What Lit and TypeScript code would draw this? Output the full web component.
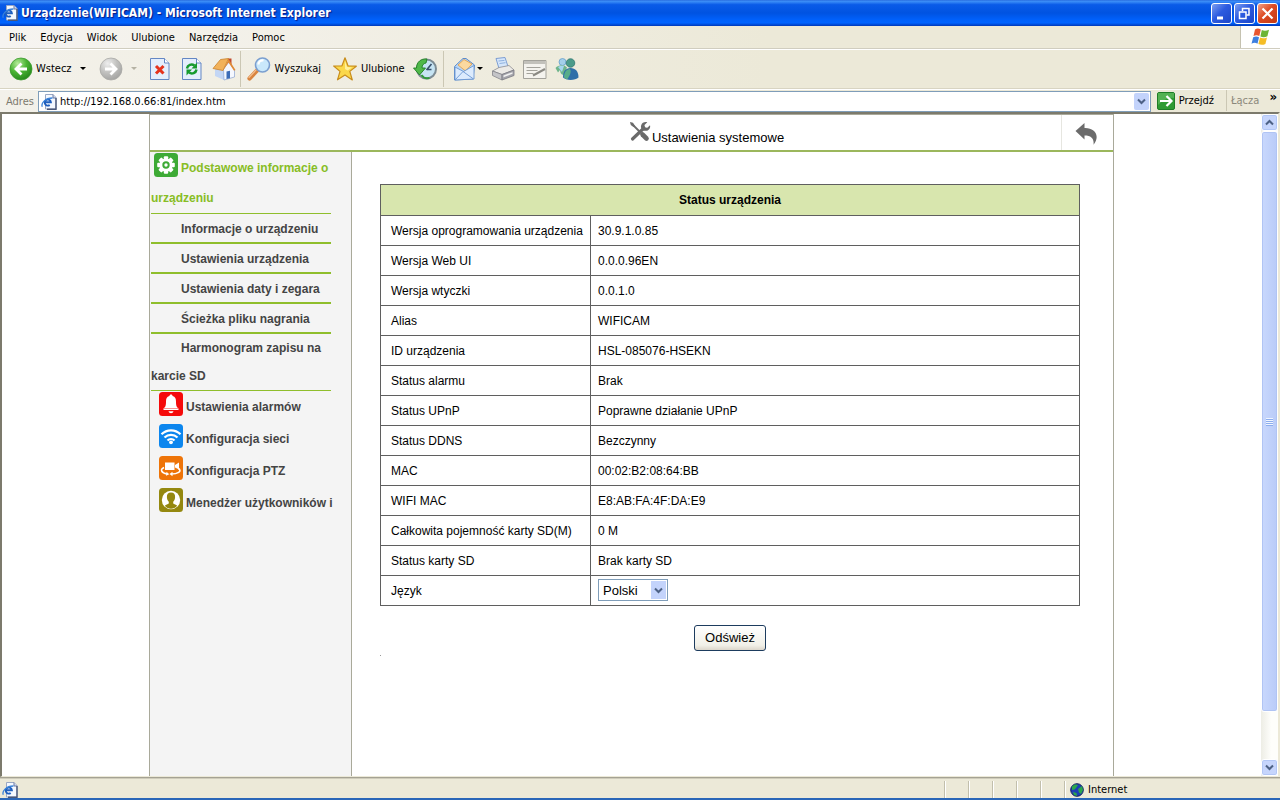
import { LitElement, html, css, svg } from "lit";
import { customElement, state } from "lit/decorators.js";

const pageIcon = (size: number) => html`<svg width=${size} height=${size} viewBox="0 0 16 16" aria-hidden="true">
  <path d="M4.500 .5h7.500l3 3v11.500H4.500z" fill="#f4f8ff" stroke="#9aa8c4" />
  <path d="M12 .5v3.500h3" fill="#cfd9ee" stroke="#6d7ba0" />
  <path d="M15 4v11.200H6" fill="none" stroke="#4a5778" stroke-width="1.400" />
  <path d="M3.500 8.300h6.400a3.100 3.100 0 1 0-1.200 2.700" fill="none" stroke="#1f5fbe" stroke-width="1.900" />
  <path d="M1.300 12.700C-.2 9.500 4 4 11.500 4" fill="none" stroke="#3a82d8" stroke-width="1.300" />
</svg>`;

const icons = {
  back: html`<svg width="24" height="24" viewBox="0 0 24 24" aria-hidden="true">
    <defs><radialGradient id="backfill" cx=".35" cy=".25" r=".8"><stop offset="0" stop-color="#b5eb9a" /><stop offset=".5" stop-color="#4bb534" /><stop offset="1" stop-color="#23851a" /></radialGradient></defs>
    <circle cx="12" cy="12" r="11" fill="url(#backfill)" stroke="#3e9a30" stroke-width=".8" />
    <path d="M12.500 6.500L7 12l5.500 5.500M7.500 12H18" fill="none" stroke="#fff" stroke-width="2.800" />
  </svg>`,
  forward: html`<svg width="24" height="24" viewBox="0 0 24 24" aria-hidden="true">
    <defs><radialGradient id="forwardfill" cx=".35" cy=".25" r=".8"><stop offset="0" stop-color="#eee" /><stop offset=".5" stop-color="#c3c3c1" /><stop offset="1" stop-color="#a2a2a0" /></radialGradient></defs>
    <circle cx="12" cy="12" r="11" fill="url(#forwardfill)" stroke="#a9a9a6" stroke-width=".8" />
    <path d="M11.500 6.500L17 12l-5.500 5.500M16.500 12H6" fill="none" stroke="#fff" stroke-width="2.800" />
  </svg>`,
  stop: html`<svg width="20" height="24" viewBox="0 0 20 24" aria-hidden="true">
    <path d="M.5 1.500h14l4.500 4.500v16.500H.5z" fill="#e4eefc" stroke="#6487c4" />
    <path d="M14.500 1.500V6H19" fill="#fff" stroke="#6487c4" />
    <path d="M6 9l7.500 7.500M13.500 9L6 16.500" stroke="#e5341d" stroke-width="3" />
  </svg>`,
  refresh: html`<svg width="20" height="24" viewBox="0 0 20 24" aria-hidden="true">
    <path d="M.5 1.500h14l4.500 4.500v16.500H.5z" fill="#e4eefc" stroke="#6487c4" />
    <path d="M14.500 1.500V6H19" fill="#fff" stroke="#6487c4" />
    <path d="M5 11.500c.5-3.500 4.500-5 7.500-3M14.500 12.500c-.5 3.500-4.500 5-7.500 3" fill="none" stroke="#169a2e" stroke-width="2.500" />
    <path d="M15 5.500v6H9.500z" fill="#169a2e" /><path d="M4.500 18.500v-6H10z" fill="#169a2e" />
  </svg>`,
  home: html`<svg width="24" height="24" viewBox="0 0 24 24" aria-hidden="true">
    <path d="M16 1.500h3.500V8H16z" fill="#c14a2d" />
    <path d="M3 12l7-7 2 8v10l-9-4z" fill="#c3d6f5" />
    <path d="M11.500 12l5.500-7 5.500 8v7L12 23z" fill="#f5f8ff" stroke="#8ba4d2" stroke-width=".7" />
    <path d="M1 11.500L8.500 2.500l8-1-5.500 12z" fill="#f2b25a" stroke="#c9822b" stroke-width=".8" />
    <path d="M16.500 2l7 11-1.500.8-5.500-8.300-5 7.500z" fill="#e08a35" />
    <path d="M14.500 14.500l3.500-.8v7.500l-3.500.8z" fill="#3c6cb8" />
  </svg>`,
  search: html`<svg width="24" height="24" viewBox="0 0 24 24" aria-hidden="true">
    <path d="M2.500 21.500L10 13.500" stroke="#d9843f" stroke-width="4.200" stroke-linecap="round" />
    <path d="M2 20.500L9 13" stroke="#f3bd8c" stroke-width="1.200" stroke-linecap="round" />
    <circle cx="15.500" cy="8" r="7" fill="#c9e8fb" stroke="#7b9fd0" stroke-width="1.600" />
    <path d="M11.500 7.500c0-3 2.500-4.500 5-4" fill="none" stroke="#fff" stroke-width="2.200" />
  </svg>`,
  star: html`<svg width="24" height="24" viewBox="0 0 24 24" aria-hidden="true">
    <path d="M12 .8l3 8 8.300.4-6.500 5.200 2.500 8.600L12 18l-7.500 4.800 2.500-8.400L.7 9l8.300-.2z" fill="#fbd84a" stroke="#c88d1c" stroke-width="1.200" stroke-linejoin="round" />
    <path d="M12 4l2 6 5 .5-4.500 3L12 12z" fill="#fff19f" />
  </svg>`,
  history: html`<svg width="24" height="24" viewBox="0 0 24 24" aria-hidden="true">
    <circle cx="13.500" cy="12" r="9.500" fill="#c6e4f3" stroke="#7d8c94" stroke-width="2" />
    <path d="M13.500 13l5-6M13.500 12.500h5" stroke="#37506b" stroke-width="1.600" />
    <path d="M14 2C8 1.300 3.500 5 3.500 11H.5l6 7 6-7H9c0-3 1.500-4.500 4-5z" fill="#4fb848" stroke="#1f7e24" stroke-width=".9" />
    <path d="M8.500 18c2 3 5 3.800 8 2.800" fill="none" stroke="#2f9a3a" stroke-width="1.800" />
  </svg>`,
  mail: html`<svg width="24" height="24" viewBox="0 0 24 24" aria-hidden="true">
    <path d="M1.500 9.500L10 1.500h3l8.500 6.500-1.500 14-18.500 1z" fill="#b8d6f6" stroke="#5e8cc9" />
    <path d="M5 8l6-5.500 8 4.500-6.500 7z" fill="#fbd9a0" stroke="#e39b3f" stroke-width=".8" />
    <path d="M2 10l8.500 4.500L21 8.500V22L2 23z" fill="#dcebfd" stroke="#6b97d2" stroke-width=".9" />
    <path d="M2 23l8-8.500L20.500 22" fill="none" stroke="#6b97d2" stroke-width=".9" />
  </svg>`,
  print: html`<svg width="24" height="24" viewBox="0 0 24 24" aria-hidden="true">
    <path d="M5 1.500l9-1 3 9-9 2z" fill="#d5e6fb" stroke="#7d9dd2" />
    <path d="M7.500 4l6-.6M8.500 6.500l6-.8" stroke="#8fb1df" />
    <path d="M1.500 14L8 10.500l10-2 5 4.500-12 4.500z" fill="#eceae6" stroke="#8d8d92" stroke-width=".8" />
    <path d="M1.500 14l9.500 3.500V23l-9.500-4.500z" fill="#c5c5c8" stroke="#85858c" stroke-width=".8" />
    <path d="M11 17.500L23 13v5.500L11 23z" fill="#a5a5ac" stroke="#7a7a83" stroke-width=".8" />
    <path d="M12.500 18.500l9-3.300v1.600l-9 3.400z" fill="#f0f0f0" />
  </svg>`,
  edit: html`<svg width="24" height="24" viewBox="0 0 24 24" aria-hidden="true">
    <path d="M.5 3.500h22.500v18H.5z" fill="#f4f3ee" stroke="#a3a29b" />
    <path d="M1 4h21.500v3H1z" fill="#c2c1bb" />
    <path d="M3.500 10.500h14M3.500 13.500h11M3.500 16.500h7" stroke="#a3a29b" />
    <path d="M10 18.500l12-6.500" stroke="#8a8983" stroke-width="2" />
  </svg>`,
  people: html`<svg width="24" height="24" viewBox="0 0 24 24" aria-hidden="true">
    <circle cx="7.500" cy="5" r="3.500" fill="#a4cfea" stroke="#5c98c9" stroke-width=".7" />
    <path d="M.5 11c3-3.500 8.500-3.500 11.500-.5l-3 7.500c-2 0-3-1-3.500-2.500L5 13l-2 2.500z" fill="#6fb58b" />
    <path d="M3 10c2-1.500 4.500-1.500 6-1l-2 6z" fill="#a6d6ef" />
    <circle cx="15.500" cy="6" r="4.300" fill="#4b9b8a" stroke="#27706b" stroke-width=".7" />
    <path d="M8 20.500c0-6 2.500-9.500 7.500-9.500s8 3.500 8 9.500c-3 3-12 3.500-15.500 0z" fill="#2f6fa8" />
    <path d="M9 20.500c0-5 2-8 6-8.500 2 3-1 8-3 10.500z" fill="#58ad8a" />
  </svg>`,
  go: html`<svg width="18" height="18" viewBox="0 0 18 18" aria-hidden="true">
    <rect x=".5" y=".5" width="17" height="17" rx="1.500" fill="#2f9a33" stroke="#1f7d26" />
    <path d="M1 1h16v5C12 5 6 8 1 13z" fill="#6cc267" opacity=".6" />
    <path d="M9.500 4l5 5-5 5M14 9H3" fill="none" stroke="#fff" stroke-width="2.200" />
  </svg>`,
  flag: html`<svg width="20" height="20" viewBox="0 0 20 20" aria-hidden="true">
    <path d="M4 2.500c2-1.500 4-1.200 5.800 0L8.300 9C6.500 8 4.500 8 2.500 9z" fill="#e8552f" />
    <path d="M10.800 3c2 1 4.500 1 7.200-.2l-1.600 6.500c-2.500 1.200-5 1-7 .2z" fill="#6db536" />
    <path d="M2.200 10.200c2-1 4-1 5.800 0l-1.500 6.500c-2-1.200-4-1-6 0z" fill="#3d7fe0" />
    <path d="M9 10.600c2 1 4.500 1 7-.2l-1.600 6.500c-2.500 1.200-5 1-7 0z" fill="#f5bd26" />
  </svg>`,
  globe: html`<svg width="14" height="14" viewBox="0 0 14 14" aria-hidden="true">
    <circle cx="7" cy="7" r="6.300" fill="#1d3fb5" stroke="#14225c" />
    <path d="M2 3.500C4 1 7 1 8 2l-2 3-1.500 1.500L2 7zM8 6l4-3 1 4-2 4-2-1.500zM3 9l3.500 1 .5 3-3-1z" fill="#2ba84a" />
  </svg>`,
  tools: html`<svg width="22" height="22" viewBox="0 0 22 22" aria-hidden="true">
    <g fill="none" stroke="#6a6a6a"><path d="M3 3l9 9" stroke-width="1.800" /><path d="M13.500 13.500l4 4" stroke-width="4.600" stroke-linecap="round" /><path d="M3.500 18L15 7" stroke-width="3.200" stroke-linecap="round" /></g>
    <path d="M1 1l3 .8L6 5 4.500 6 1.800 4z" fill="#6a6a6a" />
    <path d="M18.300 1.300L15.500 4l.4 2.400 2.400.4L21 4.200c.9 3-1.500 6-4.800 5.600-3-.2-5-3-4-5.600.8-2.400 3.500-3.700 6.100-2.900z" fill="#6a6a6a" />
  </svg>`,
  undo: html`<svg width="24" height="24" viewBox="0 0 24 24" aria-hidden="true">
    <path d="M.5 9L9.500 1v5C19 5.500 26 13 18.500 22.800c.8-6-2-9.300-9-9.300V17.500z" fill="#6b6b6b" />
  </svg>`,
};

const tile = (color: string, art: unknown) => html`<svg class="tile" width="24" height="24" viewBox="0 0 24 24" aria-hidden="true">
  <rect width="24" height="24" rx="3.500" fill=${color} />${art}</svg>`;

const gear = tile("#3daa35", svg`<g transform="translate(12 12)" fill="#fff">
  ${[0, 45, 90, 135].map((a) => svg`<rect x="-2.200" y="-8.800" width="4.400" height="17.600" rx="1" transform="rotate(${a})" />`)}
  <circle r="6.600" /><circle r="3.700" fill="#3daa35" /><circle r="1.700" /></g>`);

const groups = [
  { label: "Ustawienia alarmów", icon: tile("#f50a0a", svg`<path d="M12 2.500c1 0 1.500.6 1.600 1.500 2.700.7 3.400 2.800 3.400 5.500 0 4 .5 5.500 2.500 7v1.500H4.500v-1.500c2-1.500 2.500-3 2.500-7 0-2.700.7-4.800 3.400-5.500.1-.9.600-1.500 1.600-1.500z" fill="#fff" /><path d="M5 16.500h14" stroke="#f58a8a" stroke-width=".9" /><path d="M9.500 19.300h5c-.5 2.500-4.500 2.500-5 0z" fill="#fff" />`) },
  { label: "Konfiguracja sieci", icon: tile("#0c86ee", svg`<g fill="none" stroke="#fff" stroke-width="2.300"><path d="M2.500 10.200c5.300-5.200 13.700-5.200 19 0" /><path d="M5.500 13.500c3.700-3.500 9.300-3.500 13 0" /><path d="M8.500 16.500c2-1.900 5-1.900 7 0" /></g><circle cx="12" cy="18.300" r="1.900" fill="#fff" />`) },
  { label: "Konfiguracja PTZ", icon: tile("#ee7408", svg`<path d="M6 6.500h9.500v7.500H6zM16 9l4-2.500v7L16 11.500z" fill="#fff" /><path d="M5 11.500c-4.500 2-2.500 5.500 3 6.500M19.500 12.500c4 3-1 5.500-7.500 5.500" fill="none" stroke="#fff" stroke-width="1.600" /><path d="M7.500 15.800l2.800 2.400-3.300 1.600zM13.500 15.800v4.400l-3-2.200z" fill="#fff" />`) },
  { label: "Menedżer użytkowników i", icon: tile("#94880f", svg`<circle cx="12" cy="12" r="9.200" fill="#fff" /><path d="M12 4.500c3 0 4.300 2 4.100 4.800-.1 2-1 3.500-1.900 4.500v1.700c1 .9 2.800 1 4 2.300-3 4-9.400 4-12.400 0 1.200-1.300 3-1.400 4-2.300v-1.700c-.9-1-1.800-2.500-1.900-4.500C7.700 6.500 9 4.500 12 4.500z" fill="#94880f" />`) },
];

const rows: [string, string][] = [
  ["Wersja oprogramowania urządzenia", "30.9.1.0.85"],
  ["Wersja Web UI", "0.0.0.96EN"],
  ["Wersja wtyczki", "0.0.1.0"],
  ["Alias", "WIFICAM"],
  ["ID urządzenia", "HSL-085076-HSEKN"],
  ["Status alarmu", "Brak"],
  ["Status UPnP", "Poprawne działanie UPnP"],
  ["Status DDNS", "Bezczynny"],
  ["MAC", "00:02:B2:08:64:BB"],
  ["WIFI MAC", "E8:AB:FA:4F:DA:E9"],
  ["Całkowita pojemność karty SD(M)", "0 M"],
  ["Status karty SD", "Brak karty SD"],
];

const chevron = (flip = false) => html`<svg width="9" height="7" viewBox="0 0 9 7" aria-hidden="true">
  <path d=${flip ? "M1 5.500l3.500-3.500L8 5.500" : "M1 1.500L4.500 5 8 1.500"} fill="none" stroke="#4d6185" stroke-width="2" /></svg>`;

@customElement("camera-page")
export class CameraPage extends LitElement {
  static styles = css`
    :host { display: block; flex: 1; min-width: 0; overflow: hidden; background: #fff; font: 12px/30px "Liberation Sans", Arial, sans-serif; color: #000; }
    * { box-sizing: border-box; }
    .frame { display: flex; flex-direction: column; width: min(965px, 100%); height: 100%; margin: 0 auto; border: 1px solid #a9a99a; border-bottom: 0; }
    header { display: flex; height: 37px; border-bottom: 2px solid #9bb75c; flex: none; }
    h1 { flex: 1; margin: 0; padding-left: 202px; display: flex; justify-content: center; gap: 1px; font-size: 13px; font-weight: normal; line-height: 46px; }
    h1 svg { margin-top: 6px; }
    .return { width: 52px; border: 0; border-left: 1px solid #e6e6e0; background: none; padding: 3px 1px 0 0; display: grid; place-items: center; }
    .body { flex: 1; display: flex; min-height: 0; }
    nav { width: 202px; flex: none; background: #f4f4f4; border-right: 1px solid #a9a99a; overflow: hidden; font-weight: bold; }
    nav a { color: #444; text-decoration: none; display: block; }
    .list { width: 181px; padding-left: 1px; }
    .list a { border-bottom: 2px solid #8fbe2c; height: 30px; line-height: 30px; text-indent: 30px; white-space: nowrap; }
    .list a.head { height: auto; color: #87bd25; border-bottom-width: 1px; padding-top: 1px; text-indent: 0; white-space: normal; }
    .list a.head .tile { vertical-align: middle; margin: -2px 3px 6px 3px; }
    .list a.wrap { height: auto; line-height: 28px; border-bottom-width: 1px; white-space: normal; }
    .group { display: flex; gap: 3px; height: 32px; padding: 1px 0 0 9px; line-height: 31px; white-space: nowrap; }
    main { flex: 1; padding: 32px 33px 0 28px; min-width: 0; display: flex; flex-direction: column; align-items: center; }
    table { width: 100%; border-collapse: collapse; table-layout: fixed; }
    th, td { border: 1px solid #5f5f5f; height: 30px; padding: 0; text-align: left; line-height: 28px; white-space: nowrap; }
    thead th { height: 31px; line-height: 30px; background: #d8e6ae; text-align: center; }
    tbody th { font-weight: normal; padding-left: 10px; }
    td { padding-left: 7px; }
    col.name { width: 210px; }
    .pick { display: grid; align-items: center; height: 22px; width: 70px; margin-bottom: 1px; }
    .pick select { grid-area: 1 / 1; appearance: none; width: 100%; height: 100%; border: 1px solid #7f9db9; border-radius: 0; background: #fff; padding: 0 20px 0 4px; font: 13px "Liberation Sans", Arial, sans-serif; color: #000; }
    .pick span { grid-area: 1 / 1; justify-self: end; margin-right: 2px; width: 15px; height: 18px; background: #c3d3fb; display: grid; place-items: center; pointer-events: none; }
    .refresh { margin-top: 19px; height: 26px; padding: 0 10px 2px; border: 1px solid #1d3c5e; border-radius: 3px; background: linear-gradient(#fff, #f1f0e8 80%, #dcd6cb); font: 13px "Liberation Sans", Arial, sans-serif; color: #000; }
    .speck { align-self: flex-start; width: 1px; height: 1px; margin-top: 4px; background: #999; }
  `;
  @state() private lang = "Polski";
  render() {
    return html`<div class="frame">
      <header>
        <h1>${icons.tools}<span>Ustawienia systemowe</span></h1>
        <button class="return" aria-label="Wstecz">${icons.undo}</button>
      </header>
      <div class="body">
        <nav>
          <div class="list">
            <a class="head" href="#">${gear}Podstawowe informacje o urządzeniu</a>
            ${["Informacje o urządzeniu", "Ustawienia urządzenia", "Ustawienia daty i zegara", "Ścieżka pliku nagrania"].map((t) => html`<a href="#">${t}</a>`)}
            <a class="wrap" href="#">Harmonogram zapisu na karcie SD</a>
          </div>
          ${groups.map((g) => html`<a class="group" href="#">${g.icon}<span>${g.label}</span></a>`)}
        </nav>
        <main>
          <table>
            <colgroup><col class="name" /><col /></colgroup>
            <thead><tr><th colspan="2" scope="colgroup">Status urządzenia</th></tr></thead>
            <tbody>
              ${rows.map(([k, v]) => html`<tr><th scope="row">${k}</th><td>${v}</td></tr>`)}
              <tr>
                <th scope="row"><label for="lang">Język</label></th>
                <td><div class="pick">
                  <select id="lang" .value=${this.lang} @change=${(e: Event) => (this.lang = (e.target as HTMLSelectElement).value)}><option>Polski</option></select>
                  <span>${chevron()}</span>
                </div></td>
              </tr>
            </tbody>
          </table>
          <button class="refresh">Odśwież</button>
          <div class="speck"></div>
        </main>
      </div>
    </div>`;
  }
}

@customElement("app-root")
export class AppRoot extends LitElement {
  static styles = css`
    :host { display: flex; flex-direction: column; height: 100vh; overflow: hidden; background: #ece9d8; font: 11px/14px "DejaVu Sans Condensed", Tahoma, sans-serif; color: #000; }
    * { box-sizing: border-box; }
    button { font: inherit; color: inherit; background: none; border: 0; padding: 0; margin: 0; }
    svg { display: block; flex: none; }
    .title { height: 26px; flex: none; display: flex; align-items: center; gap: 3px; padding: 0 2px; background: linear-gradient(#2b6fe0 0, #3a8cf7 6%, #0a5be8 18%, #0053e1 50%, #0060fa 75%, #0064ff 88%, #0038b8 100%); }
    .title h1 { flex: 1; margin: 0; font: bold 12px/26px "DejaVu Sans Condensed", "Trebuchet MS", sans-serif; color: #fff; text-shadow: 1px 1px 1px #0a1883; }
    .win { width: 21px; height: 21px; border: 1px solid #fff; border-radius: 3px; background: linear-gradient(135deg, #7d9ff0, #2c5be0 45%, #1c46c8); display: grid; place-items: center; margin-right: -1px; }
    .win.close { background: linear-gradient(135deg, #f0a088, #dd4a22 45%, #c23a14); margin-right: 0; }
    .menu { height: 22px; flex: none; display: flex; background: linear-gradient(90deg, #f6f4f1, #ece9d8 60%); padding-left: 2px; }
    .menu button { padding: 1px 7px 0; height: 22px; }
    .brand { margin-left: auto; width: 40px; border-left: 1px solid #c5c2b0; background: #fff; display: grid; place-items: center; }
    .tools { height: 41px; flex: none; display: flex; align-items: center; padding: 0 9px; border-top: 1px solid #d0cdbf; background: linear-gradient(90deg, #f3f1ea, #ece9d8 60%); box-shadow: inset 0 1px #fff; border-bottom: 1px solid #d8d4c2; }
    .tools button { display: flex; align-items: center; gap: 4px; margin-right: 8px; height: 24px; }
    .tools .tight { margin-right: 5px; gap: 3px; }
    .tools .sheet { width: 24px; justify-content: center; }
    .tools .drop { width: 12px; justify-content: center; margin-right: 10px; }
    .tools .drop.off { margin-right: 8px; }
    .tools .pair { margin-right: 12px; }
    .tools .menued { gap: 0; }
    .sep { width: 1px; height: 36px; background: #cbc7b4; margin: 0 9px 0 -2px; }
    .sep.first { margin: 0 6px 0 -4px; }
    .caret { border: 3px solid transparent; border-top-color: #000; border-bottom: 0; }
    .off .caret { border-top-color: #b5b2a4; }
    .address { height: 23px; flex: none; display: flex; align-items: center; background: linear-gradient(90deg, #f3f1ea, #ece9d8 60%); box-shadow: inset 0 1px #fff; }
    .address label { width: 38px; padding: 2px 0 0 6px; color: #7d7a6e; }
    .field { flex: 1; height: 21px; display: flex; align-items: center; background: #fff; border: 1px solid #7f9db9; padding: 0 1px 0 2px; gap: 3px; margin-top: 2px; }
    .field input { flex: 1; min-width: 0; border: 0; padding: 0; outline: 0; background: none; font: inherit; color: #000; }
    .field button { width: 15px; height: 17px; background: #c3d3fb; border-radius: 2px; display: grid; place-items: center; }
    .go { display: flex; align-items: center; gap: 4px; margin: 0 12px 0 6px; }
    .links { height: 21px; width: 54px; border-left: 1px solid #cbc7b4; display: flex; padding: 4px 3px 0 4px; color: #8b887b; justify-content: space-between; }
    .links b { color: #000; font-size: 13px; line-height: 6px; }
    .view { flex: 1; min-height: 0; display: flex; border-top: 2px solid #7c7a6c; border-left: 2px solid #7c7a6c; border-right: 2px solid #ece9d8; border-bottom: 1px solid #ece9d8; background: #fff; }
    .scroll { width: 17px; flex: none; display: flex; flex-direction: column; background: linear-gradient(90deg, #edede5, #fefefb 60%); }
    .scroll button { height: 17px; flex: none; border: 1px solid #fff; border-radius: 3px; background: #c6d5fc; box-shadow: inset 0 0 0 1px #b2c6f5; display: grid; place-items: center; }
    .thumb { flex: 580; border: 1px solid #fff; border-radius: 3px; background: linear-gradient(90deg, #c9d8fd, #b9cbf8); box-shadow: inset 0 0 0 1px #b0c4f4; display: grid; place-items: center; }
    .grip { width: 7px; height: 8px; background: repeating-linear-gradient(#f0f5ff 0 1px, #8cadee 1px 2px); }
    .room { flex: 47; }
    footer { height: 23px; flex: none; display: flex; align-items: center; border-top: 1px solid #a5a293; border-bottom: 2px solid #2a66b8; padding: 3px 0 0 2px; box-shadow: inset 0 1px #cfccbb; }
    .cell { width: 24px; height: 17px; border-left: 1px solid #c2bfac; box-shadow: inset 1px 0 #fff; }
    .cell.first { margin-left: auto; }
    .zone { width: 216px; display: flex; align-items: center; gap: 4px; padding-left: 5px; }
  `;
  render() {
    const tool = (label: string, icon: unknown, cls = "") => html`<button class=${cls} aria-label=${label}>${icon}</button>`;
    return html`
      <div class="title">
        ${pageIcon(16)}
        <h1>Urządzenie(WIFICAM) - Microsoft Internet Explorer</h1>
        <button class="win" aria-label="Minimalizuj"><svg width="15" height="15" viewBox="0 0 15 15"><path d="M3 12h6" stroke="#fff" stroke-width="3" /></svg></button>
        <button class="win" aria-label="Przywróć"><svg width="15" height="15" viewBox="0 0 15 15"><path d="M5.500 5V2.500H12V9H9.500" fill="none" stroke="#fff" stroke-width="1.500" /><path d="M2.500 6h6.500v6.500H2.500z" fill="none" stroke="#fff" stroke-width="1.500" /></svg></button>
        <button class="win close" aria-label="Zamknij"><svg width="15" height="15" viewBox="0 0 15 15"><path d="M2.500 2.500l10 10M12.500 2.500l-10 10" stroke="#fff" stroke-width="2.200" /></svg></button>
      </div>
      <div class="menu">
        ${["Plik", "Edycja", "Widok", "Ulubione", "Narzędzia", "Pomoc"].map((t) => html`<button>${t}</button>`)}
        <span class="brand">${icons.flag}</span>
      </div>
      <div class="tools">
        <button class="tight">${icons.back}Wstecz</button>
        <button class="drop" aria-label="Historia wstecz"><i class="caret"></i></button>
        ${tool("Dalej", icons.forward, "tight")}
        <button class="drop off" aria-label="Historia dalej"><i class="caret"></i></button>
        ${tool("Zatrzymaj", icons.stop, "sheet")}
        ${tool("Odśwież", icons.refresh, "sheet")}
        ${tool("Strona główna", icons.home)}
        <span class="sep first"></span>
        <button class="pair">${icons.search}Wyszukaj</button>
        <button>${icons.star}Ulubione</button>
        ${tool("Historia", icons.history)}
        <span class="sep"></span>
        ${tool("Poczta", html`${icons.mail}<i class="caret"></i>`, "menued")}
        ${tool("Drukuj", icons.print)}
        ${tool("Edytuj", icons.edit)}
        ${tool("Messenger", icons.people)}
      </div>
      <div class="address">
        <label for="url">Adres</label>
        <div class="field">${pageIcon(16)}<input id="url" value="http://192.168.0.66:81/index.htm" /><button aria-label="Rozwiń">${chevron()}</button></div>
        <button class="go">${icons.go}Przejdź</button>
        <div class="links"><span>Łącza</span><b>»</b></div>
      </div>
      <div class="view">
        <camera-page></camera-page>
        <div class="scroll">
          <button aria-label="W górę">${chevron(true)}</button>
          <div class="thumb"><span class="grip"></span></div>
          <div class="room"></div>
          <button aria-label="W dół">${chevron()}</button>
        </div>
      </div>
      <footer>
        ${pageIcon(16)}
        <span class="cell first"></span><span class="cell"></span><span class="cell"></span><span class="cell"></span><span class="cell"></span>
        <span class="cell zone">${icons.globe}Internet</span>
      </footer>`;
  }
}
